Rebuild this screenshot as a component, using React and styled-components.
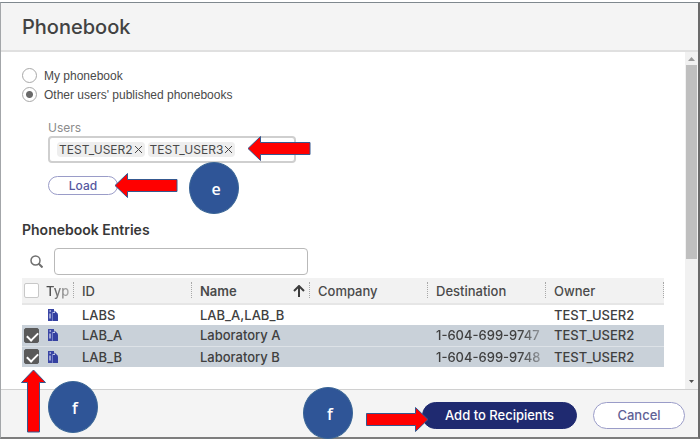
import { useState } from 'react';
import styled, { createGlobalStyle, css } from 'styled-components';

const colors = {
    navy: '#1f2a70',
    outline: '#9a9cc8',
    text: '#4a4a4a',
    muted: '#8c8c8c',
    panel: '#f4f4f4',
    selected: '#c9d1d9',
    callout: '#2f5597',
};

const GlobalStyle = createGlobalStyle`
  * {
    box-sizing: border-box;
  }

  body {
    margin: 0;
    background: #ffffff;
    color: ${colors.text};
    font-family: Inter, "Liberation Sans", sans-serif;
    font-size: 12px;
  }

  button,
  input {
    font-family: inherit;
  }
`;

const Dialog = styled.main`
  display: flex;
  flex-direction: column;
  min-height: calc(100vh - 2px);
  margin-top: 2px;
  border: 1px solid #a3a6a9;
  border-top-color: #7f888e;
  border-right: 2px solid #6a6a6a;
  border-bottom: 2px solid #7d7d7d;
`;

const DialogHeader = styled.header`
  padding: 12px 21px 11px;
  border-bottom: 2px solid #e0e0e0;
  background: ${colors.panel};
`;

const Title = styled.h1`
  margin: 0;
  color: #424242;
  font-size: 20px;
  font-weight: 500;
  line-height: 24px;
`;

const DialogBody = styled.div`
  display: flex;
  flex: 1;
`;

const Content = styled.div`
  flex: 1;
  min-width: 0;
  padding: 14px 21px 20px;
`;

const ScrollTrack = styled.div`
  display: flex;
  flex-direction: column;
  align-items: center;
  width: 13px;
  background: #f1f1f1;
`;

const ScrollArrow = styled.svg`
  width: 13px;
  height: 13px;
  fill: ${props => props.color};
`;

const ScrollThumb = styled.div`
  flex: 5;
  width: 11px;
  background: #bfbfbf;
`;

const ScrollRest = styled.div`
  flex: 3;
`;

const RadioLabel = styled.label`
  display: flex;
  align-items: center;
  gap: 7px;
  height: 19px;
  font-family: "Liberation Sans", sans-serif;
  font-size: 12px;
`;

const Radio = styled.input`
  appearance: none;
  width: 15px;
  height: 15px;
  margin: 0;
  border: 1px solid #a8a8a8;
  border-radius: 50%;
  background: #ffffff;

  &:checked {
    background: radial-gradient(circle, #6a6a6a 3px, #ffffff 4px);
  }
`;

const UsersGroup = styled.div`
  width: 248px;
  margin: 16px 0 0 26px;
`;

const FieldLabel = styled.label`
  display: block;
  color: ${colors.muted};
  font-size: 12px;
  line-height: 16px;
`;

const Anchor = styled.div`
  position: relative;
`;

const LoadAnchor = styled(Anchor)`
  width: 70px;
  margin-top: 13px;
`;

const UsersField = styled.div`
  display: flex;
  align-items: center;
  gap: 3px;
  height: 27px;
  padding: 0 7px;
  border: 2px solid #cfcfcf;
  border-radius: 4px;
`;

const Chip = styled.span`
  display: flex;
  align-items: center;
  gap: 1px;
  height: 15px;
  padding: 0 2px;
  border-radius: 4px;
  background: #eeeeee;
  font-size: 12px;
`;

const ChipRemove = styled.button`
  display: flex;
  padding: 0;
  border: 0;
  background: none;
  color: inherit;

  svg {
    width: 9px;
    height: 9px;
    fill: none;
    stroke: currentColor;
    stroke-width: 1;
  }
`;

const UsersInput = styled.input`
  flex: 1;
  min-width: 0;
  border: 0;
  outline: 0;
  background: none;
`;

const Button = styled.button`
  min-width: 92px;
  height: 27px;
  padding: 0 22px;
  border: 1px solid ${colors.outline};
  border-radius: 16px;
  background: #ffffff;
  color: #5f6296;
  font-size: 13px;
  font-weight: 500;

  ${props => props.$primary && css`
    border-color: ${colors.navy};
    background: ${colors.navy};
    color: #ffffff;
  `}

  ${props => props.$small && css`
    display: block;
    width: 100%;
    min-width: 0;
    height: 19px;
    padding: 0;
    color: #5557a0;
    font-size: 12px;
    line-height: 12px;
  `}
`;

const SectionTitle = styled.h2`
  margin: 25px 0 8px;
  color: #383838;
  font-size: 14px;
  font-weight: 600;
  line-height: 20px;
`;

const SearchRow = styled.div`
  display: flex;
  align-items: center;
  gap: 11px;
  padding-left: 8px;
`;

const SearchLabel = styled.label`
  display: flex;

  svg {
    width: 13px;
    height: 13px;
    fill: none;
    stroke: #6f6f6f;
  }
`;

const SearchInput = styled.input`
  width: 254px;
  height: 27px;
  border: 1px solid #b9b9b9;
  border-radius: 4px;
`;

const TableAnchor = styled(Anchor)`
  margin-top: 3px;
`;

const Entries = styled.table`
  width: 100%;
  border-collapse: collapse;
  table-layout: fixed;
`;

const HeadCell = styled.th`
  position: relative;
  height: 26px;
  padding: 0 0 0 ${props => (props.$narrow ? '4px' : '8px')};
  border-bottom: 2px solid #e6e6e6;
  background: #f2f2f2;
  font-size: 13px;
  font-weight: ${props => (props.$sorted ? 600 : 500)};
  text-align: left;

  &:not(:first-child)::after {
    content: '';
    position: absolute;
    top: 4px;
    right: 0;
    height: 16px;
    border-right: 1px dotted #a8a8a8;
  }
`;

const HeadCheckCell = styled(HeadCell)`
  padding: 0 0 0 2px;
`;

const HeadContent = styled.span`
  display: flex;
  align-items: center;
  justify-content: space-between;
  padding-right: 5px;

  svg {
    width: 12px;
    height: 12px;
    fill: none;
    stroke: #3c3c3c;
    stroke-width: 2;
  }
`;

const Row = styled.tr`
  background: ${props => (props.$selected ? colors.selected : '#ffffff')};

  & + & td {
    border-top: 1px solid #dde2e7;
  }
`;

const Cell = styled.td`
  height: 21px;
  padding: 0 0 0 ${props => (props.$narrow ? '5px' : '8px')};
  color: #404040;
  font-size: 13px;
  font-weight: 500;
  line-height: 16px;
  white-space: nowrap;
`;

const CheckCell = styled(Cell)`
  padding: 0 0 0 2px;
`;

const Fade = styled.span`
  display: block;
  width: fit-content;
  mask-image: linear-gradient(to right, #000000 calc(100% - 20px), rgba(0, 0, 0, 0.4));
`;

const Checkbox = styled.input`
  appearance: none;
  display: block;
  width: 15px;
  height: 15px;
  margin: 0;
  border: 1px solid #c8c8c8;
  border-radius: 2px;
  background: #ffffff;

  &:checked {
    border-color: #5a5a5a;
    background: #5a5a5a;
  }

  &:checked::after {
    content: '';
    display: block;
    width: 9px;
    height: 5px;
    margin: 3px 0 0 2px;
    border: solid #ffffff;
    border-width: 0 0 2px 2px;
    transform: rotate(-45deg);
  }
`;

const TypeIcon = styled.svg`
  display: block;
  width: 12px;
  height: 14px;
`;

const DialogFooter = styled.footer`
  display: flex;
  align-items: center;
  justify-content: flex-end;
  gap: 16px;
  height: 48px;
  padding: 3px 13px 0 20px;
  border-top: 1px solid #d0d0d0;
  background: ${colors.panel};
`;

const Arrow = styled.svg`
  position: absolute;
  z-index: 1;
  left: ${props => props.$left}px;
  top: ${props => props.$top}px;
  overflow: visible;
  fill: #ff0000;
  stroke: #35588f;
  stroke-width: 1;
`;

const Callout = styled.span`
  position: absolute;
  z-index: 1;
  left: ${props => props.$left}px;
  top: ${props => props.$top}px;
  display: flex;
  align-items: center;
  justify-content: center;
  width: 50px;
  height: 52px;
  padding: 2px 0 0 4px;
  border: 1px solid #3a6596;
  border-radius: 50%;
  background: ${colors.callout};
  color: #ffffff;
  font-family: "Open Sans", sans-serif;
  font-size: 16px;
  font-weight: 600;
`;

const ArrowLeft = ({ left, top }) => (
    <Arrow $left={left} $top={top} width="62" height="25" aria-hidden="true">
        <path d="M0 12.5 L12.5 0.5 V6.5 H62 V18.5 H12.5 V24.5 Z" />
    </Arrow>
);

const ArrowRight = ({ left, top }) => (
    <Arrow $left={left} $top={top} width="62" height="25" aria-hidden="true">
        <path d="M62 12.5 L49.5 0.5 V6.5 H0.5 V18.5 H49.5 V24.5 Z" />
    </Arrow>
);

const ArrowUp = ({ left, top }) => (
    <Arrow $left={left} $top={top} width="25" height="62" aria-hidden="true">
        <path d="M12.5 0 L24.5 12.5 H18.5 V62 H6.5 V12.5 H0.5 Z" />
    </Arrow>
);

const EntryIcon = () => (
    <TypeIcon viewBox="0 0 12 14" role="img" aria-label="Group">
        <path d="M1 1h6v3h-1v9H1Z" fill="#3a46a5" />
        <path d="M6 5h2V3.5L11 6.5V13H6Z" fill="#3440a0" />
        <path d="M7.5 2.5 11 6H7.5Z" fill="#3440a0" />
        <path d="M2.5 3h1.500M3 5.500v5" stroke="#ffffff" fill="none" />
        <path d="M5.500 4.500h2.500" stroke="#c3c8ea" fill="none" />
        <path d="M5.500 5v8" stroke="#7680c6" fill="none" />
    </TypeIcon>
);

const columns = ['ID', 'Name', 'Company', 'Destination', 'Owner'];

const entries = [
    { id: 'LABS', name: 'LAB_A,LAB_B', destination: '', owner: 'TEST_USER2' },
    { id: 'LAB_A', name: 'Laboratory A', destination: '1-604-699-9747', owner: 'TEST_USER2' },
    { id: 'LAB_B', name: 'Laboratory B', destination: '1-604-699-9748', owner: 'TEST_USER2' },
];

export default function App() {
    const [source, setSource] = useState('others');
    const [users, setUsers] = useState(['TEST_USER2', 'TEST_USER3']);
    const [selected, setSelected] = useState(['LAB_A', 'LAB_B']);

    const toggle = id => {
        setSelected(selected.includes(id) ? selected.filter(item => item !== id) : [...selected, id]);
    };

    const toggleAll = () => {
        setSelected(selected.length === entries.length ? [] : entries.map(entry => entry.id));
    };

    return (
        <>
            <GlobalStyle />
            <Dialog>
                <DialogHeader>
                    <Title>Phonebook</Title>
                </DialogHeader>
                <DialogBody>
                    <Content>
                        <RadioLabel>
                            <Radio type="radio" name="source" checked={source === 'mine'} onChange={() => setSource('mine')} />
                            My phonebook
                        </RadioLabel>
                        <RadioLabel>
                            <Radio type="radio" name="source" checked={source === 'others'} onChange={() => setSource('others')} />
                            Other users' published phonebooks
                        </RadioLabel>

                        <UsersGroup>
                            <FieldLabel htmlFor="users">Users</FieldLabel>
                            <Anchor>
                                <UsersField>
                                    {users.map(user => (
                                        <Chip key={user}>
                                            {user}
                                            <ChipRemove
                                                type="button"
                                                aria-label={`Remove ${user}`}
                                                onClick={() => setUsers(users.filter(item => item !== user))}
                                            >
                                                <svg viewBox="0 0 9 9"><path d="m1 1 7 7M8 1 1 8" /></svg>
                                            </ChipRemove>
                                        </Chip>
                                    ))}
                                    <UsersInput id="users" type="text" />
                                </UsersField>
                                <ArrowLeft left={200} top={0} />
                            </Anchor>
                            <LoadAnchor>
                                <Button type="button" $small>Load</Button>
                                <ArrowLeft left={67} top={-3} />
                                <Callout $left={141} $top={-14}>e</Callout>
                            </LoadAnchor>
                        </UsersGroup>

                        <SectionTitle>Phonebook Entries</SectionTitle>
                        <SearchRow>
                            <SearchLabel htmlFor="search" aria-label="Search entries">
                                <svg viewBox="0 0 13 13">
                                    <circle cx="5.5" cy="5.5" r="4.5" strokeWidth="1.5" />
                                    <path d="m8.5 8.5 4 4" strokeWidth="2" />
                                </svg>
                            </SearchLabel>
                            <SearchInput id="search" type="text" />
                        </SearchRow>

                        <TableAnchor>
                            <Entries>
                                <colgroup>
                                    <col width="20" />
                                    <col width="32" />
                                    {columns.map(column => <col key={column} />)}
                                </colgroup>
                                <thead>
                                    <tr>
                                        <HeadCheckCell>
                                            <Checkbox
                                                type="checkbox"
                                                aria-label="Select all"
                                                checked={selected.length === entries.length}
                                                onChange={toggleAll}
                                            />
                                        </HeadCheckCell>
                                        <HeadCell $narrow><Fade>Typ</Fade></HeadCell>
                                        {columns.map(column => (
                                            <HeadCell key={column} $sorted={column === 'Name'}>
                                                <HeadContent>
                                                    {column}
                                                    {column === 'Name' && (
                                                        <svg viewBox="0 0 12 12"><path d="M6 12V1M1 6l5-5 5 5" /></svg>
                                                    )}
                                                </HeadContent>
                                            </HeadCell>
                                        ))}
                                    </tr>
                                </thead>
                                <tbody>
                                    {entries.map(entry => (
                                        <Row key={entry.id} $selected={selected.includes(entry.id)}>
                                            <CheckCell>
                                                {entry.destination && (
                                                    <Checkbox
                                                        type="checkbox"
                                                        aria-label={`Select ${entry.id}`}
                                                        checked={selected.includes(entry.id)}
                                                        onChange={() => toggle(entry.id)}
                                                    />
                                                )}
                                            </CheckCell>
                                            <Cell $narrow><EntryIcon /></Cell>
                                            <Cell>{entry.id}</Cell>
                                            <Cell>{entry.name}</Cell>
                                            <Cell />
                                            <Cell><Fade>{entry.destination}</Fade></Cell>
                                            <Cell>{entry.owner}</Cell>
                                        </Row>
                                    ))}
                                </tbody>
                            </Entries>
                            <ArrowUp left={-1} top={92} />
                            <Callout $left={26} $top={103}>f</Callout>
                        </TableAnchor>
                    </Content>
                    <ScrollTrack>
                        <ScrollArrow viewBox="0 0 13 13" color="#9a9a9a"><path d="m3 9 3.500-4L10 9Z" /></ScrollArrow>
                        <ScrollThumb />
                        <ScrollRest />
                        <ScrollArrow viewBox="0 0 13 13" color="#505050"><path d="m4 4 2.500 3L9 4Z" /></ScrollArrow>
                    </ScrollTrack>
                </DialogBody>
                <DialogFooter>
                    <Anchor>
                        <Button type="button" $primary>Add to Recipients</Button>
                        <ArrowRight left={-56} top={5} />
                        <Callout $left={-119} $top={-15}>f</Callout>
                    </Anchor>
                    <Button type="button">Cancel</Button>
                </DialogFooter>
            </Dialog>
        </>
    );
}
